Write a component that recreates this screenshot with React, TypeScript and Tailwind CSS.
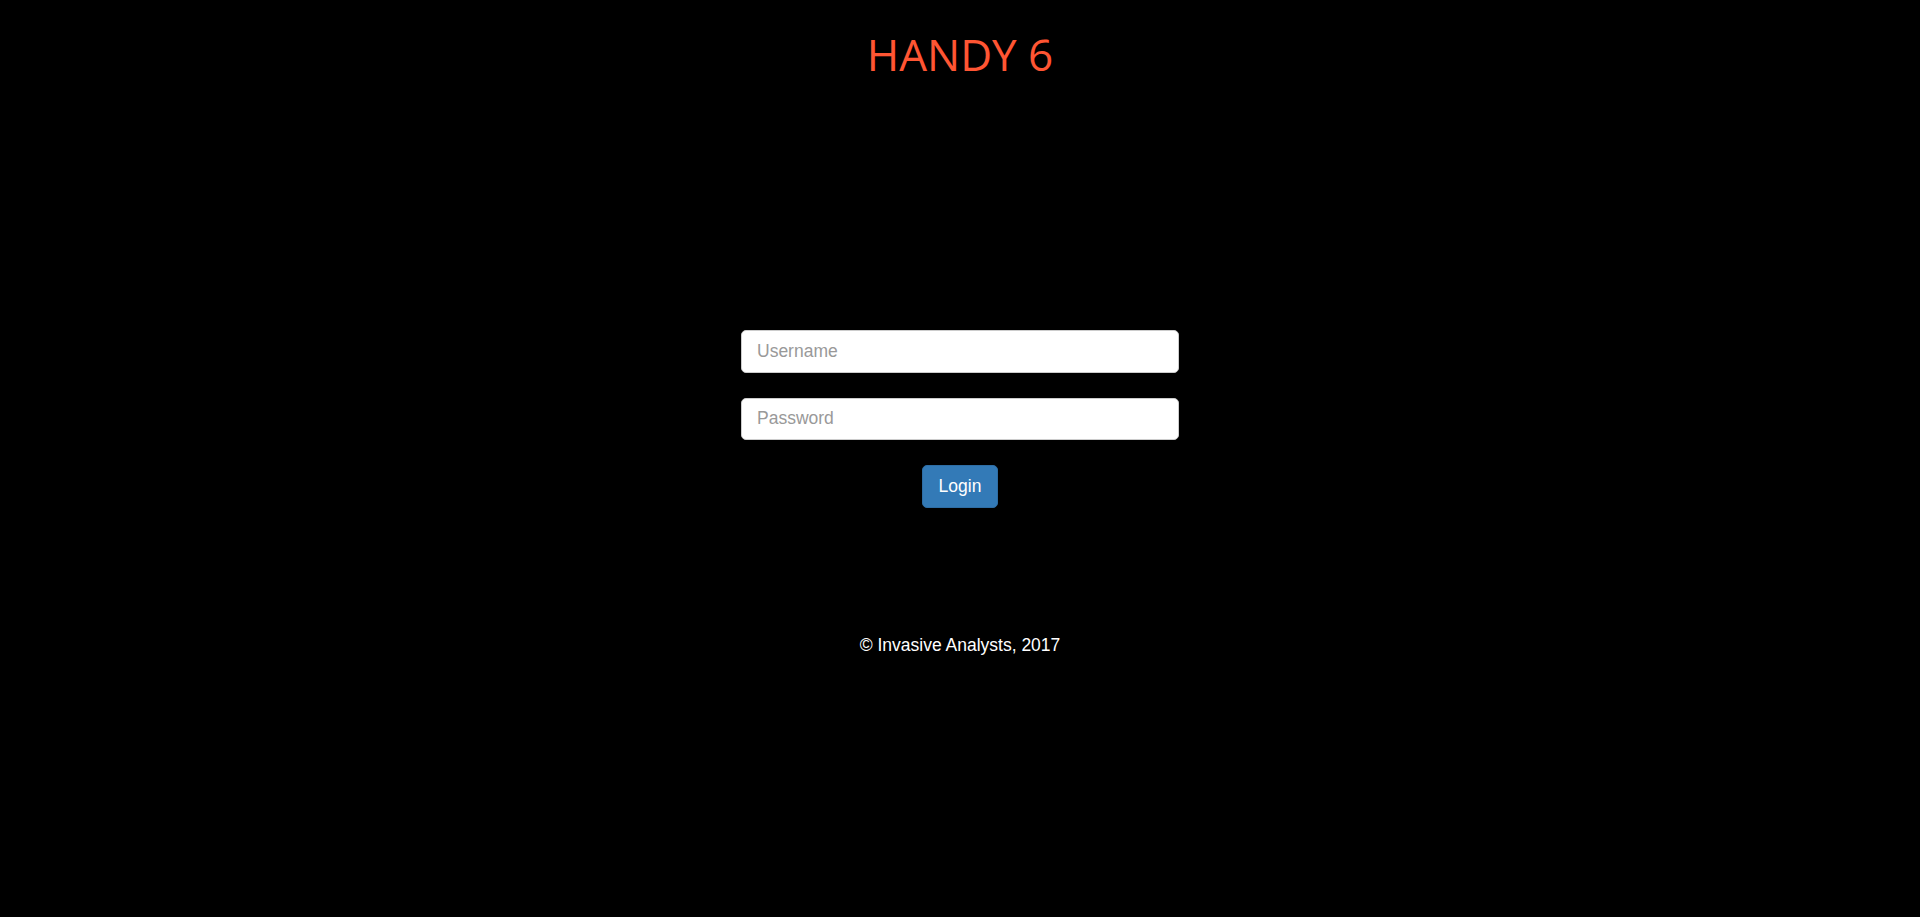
export default function App() {
  return (
    <div className="min-h-[917px] w-full bg-black flex flex-col items-center" style={{ fontFamily: '"Liberation Sans", Arial, sans-serif' }}>
      <h1
        className="mt-[28px] text-[44px] leading-[53px] text-[#ff5533] font-normal"
        style={{ fontFamily: '"Open Sans", sans-serif' }}
      >
        HANDY 6
      </h1>

      <form className="mt-[249px] w-[438px] flex flex-col items-center" onSubmit={(e) => e.preventDefault()}>
        <input
          type="text"
          placeholder="Username"
          className="w-full h-[42.5px] px-[15px] bg-white border border-[#ccc] rounded-[5px] text-[17.5px] text-[#555] placeholder:text-[#999] outline-none"
        />
        <input
          type="password"
          placeholder="Password"
          className="mt-[25px] w-full h-[42.5px] px-[15px] bg-white border border-[#ccc] rounded-[5px] text-[17.5px] text-[#555] placeholder:text-[#999] outline-none"
        />
        <button
          type="submit"
          className="mt-[25px] h-[42.5px] px-[16px] bg-[#337ab7] border border-[#2e6da4] rounded-[5px] text-white text-[17.5px]"
        >
          Login
        </button>
      </form>

      <p className="mt-[125px] text-white text-[17.5px] leading-[25px]">© Invasive Analysts, 2017</p>
    </div>
  )
}
